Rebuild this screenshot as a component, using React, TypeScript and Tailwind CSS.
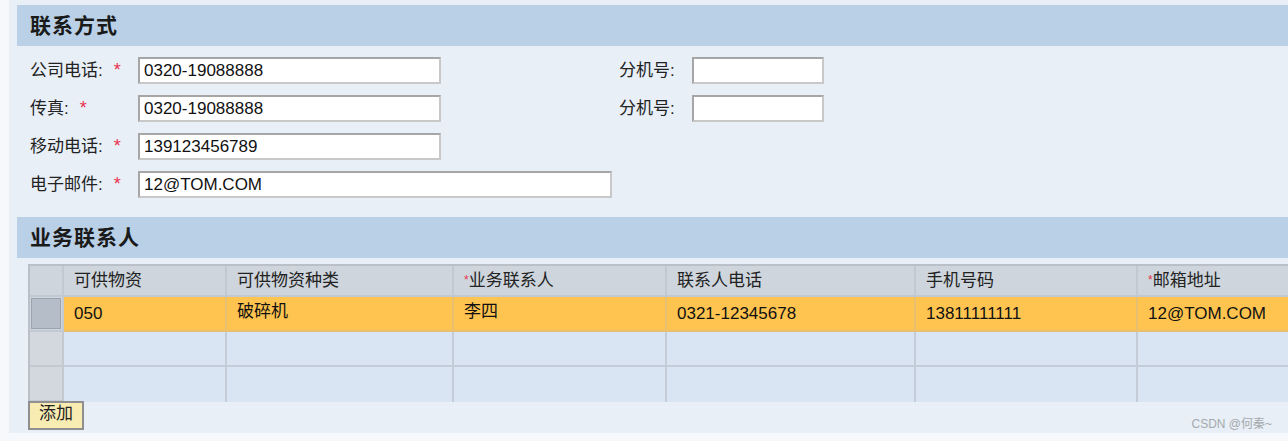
import React from "react";

const font = { fontFamily: '"Liberation Sans", "Noto Sans CJK SC", sans-serif' };

function Star() {
  return <span className="text-[#e8344e] ml-[11px] text-[18px]">*</span>;
}

function Field({ label, req, w, value }: { label: string; req?: boolean; w: number; value?: string }) {
  return (
    <div className="flex items-center">
      <div className="w-[108px] shrink-0 text-[#222] flex items-center">
        <span>{label}:</span>
        {req && <Star />}
      </div>
      <div
        className="h-[27px] bg-white border-2 border-[#a6a6a6] border-r-[#c8c8c8] border-b-[#c8c8c8] flex items-center pl-[4px] text-[#111] overflow-hidden whitespace-nowrap"
        style={{ width: w }}
      >
        {value}
      </div>
    </div>
  );
}

function Ext() {
  return (
    <div className="flex items-center">
      <div className="w-[73px] text-[#222]">分机号:</div>
      <div className="h-[27px] w-[132px] bg-white border-2 border-[#a6a6a6] border-r-[#c8c8c8] border-b-[#c8c8c8]" />
    </div>
  );
}

const cols = ["可供物资", "可供物资种类", "*业务联系人", "联系人电话", "手机号码", "*邮箱地址"];
const row1 = ["050", "破碎机", "李四", "0321-12345678", "13811111111", "12@TOM.COM"];

export default function App() {
  return (
    <div className="w-[1288px] h-[441px] bg-[#f6f8fb] relative overflow-hidden text-[17px]" style={font}>
      <div className="ml-[9px] h-[433px] bg-[#e8eff7] pt-[5px] flex flex-col overflow-hidden">
        <div className="ml-[8px] h-[41px] bg-[#b9d0e6] pl-[13px] flex items-center text-[21px] font-bold text-[#1a1a1a] tracking-[1px]">
          联系方式
        </div>
        <div className="pl-[21px] mt-[11px] flex flex-col gap-[11px]">
          <div className="flex items-center">
            <div className="w-[589px]">
              <Field label="公司电话" req w={303} value="0320-19088888" />
            </div>
            <Ext />
          </div>
          <div className="flex items-center">
            <div className="w-[589px]">
              <Field label="传真" req w={303} value="0320-19088888" />
            </div>
            <Ext />
          </div>
          <Field label="移动电话" req w={303} value="139123456789" />
          <Field label="电子邮件" req w={474} value="12@TOM.COM" />
        </div>
        <div className="ml-[8px] mt-[19px] h-[41px] bg-[#b9d0e6] pl-[13px] flex items-center text-[21px] font-bold text-[#1a1a1a] tracking-[1px] shrink-0">
          业务联系人
        </div>
        <div className="ml-[19px] mt-[6px] w-[1400px] border-t-2 border-l-2 border-[#b9c0c8]">
          <div className="grid grid-cols-[34px_163px_227px_213px_249px_222px_250px]">
            <div className="h-[31px] bg-[#ced5dc] border-r-2 border-b-2 border-[#c2c9d1]" />
            {cols.map((c, i) => (
              <div key={i} className="h-[31px] bg-[#ced5dc] border-r-2 border-b-2 border-[#c2c9d1] pl-[10px] flex items-center text-[#222] whitespace-nowrap">
                {c.startsWith("*") ? (
                  <>
                    <span className="text-[#e8344e] text-[12px] self-start mt-[5px]">*</span>
                    {c.slice(1)}
                  </>
                ) : (
                  c
                )}
              </div>
            ))}
            <div className="h-[35px] bg-[#ced5dc] border-r-2 border-b-2 border-[#c2c9d1] p-[1px]">
              <div className="w-full h-full bg-[#b4bdc8] border border-[#9aa4b0]" />
            </div>
            {row1.map((c, i) => (
              <div key={i} className="h-[35px] bg-[#ffc44f] border-r-2 border-b-2 border-[#e6c070] pl-[10px] flex items-center text-[#111] whitespace-nowrap">
                <span className={i === 1 || i === 2 ? "-mt-[4px]" : ""}>{c}</span>
              </div>
            ))}
            {[0, 1].map((r) => (
              <React.Fragment key={r}>
                <div className="h-[35px] bg-[#d3d8de] border-r-2 border-b-2 border-[#c2c9d1]" />
                {cols.map((_, i) => (
                  <div key={i} className={`h-[35px] bg-[#d9e5f2] border-r-2 border-[#c3ccd7] ${r === 0 ? "border-b-2" : ""}`} />
                ))}
              </React.Fragment>
            ))}
          </div>
        </div>
        <div className="ml-[19px] -mt-[1px]">
          <button className="w-[56px] h-[29px] bg-[#f8ecb2] border-2 border-[#8f8f8f] text-[#222] text-[17px] flex items-center justify-center pb-[4px]">
            添加
          </button>
        </div>
      </div>
      <div className="absolute right-[16px] bottom-[8px] text-[12px] text-[#a5a9ad]" style={font}>
        CSDN @何秦~
      </div>
    </div>
  );
}
